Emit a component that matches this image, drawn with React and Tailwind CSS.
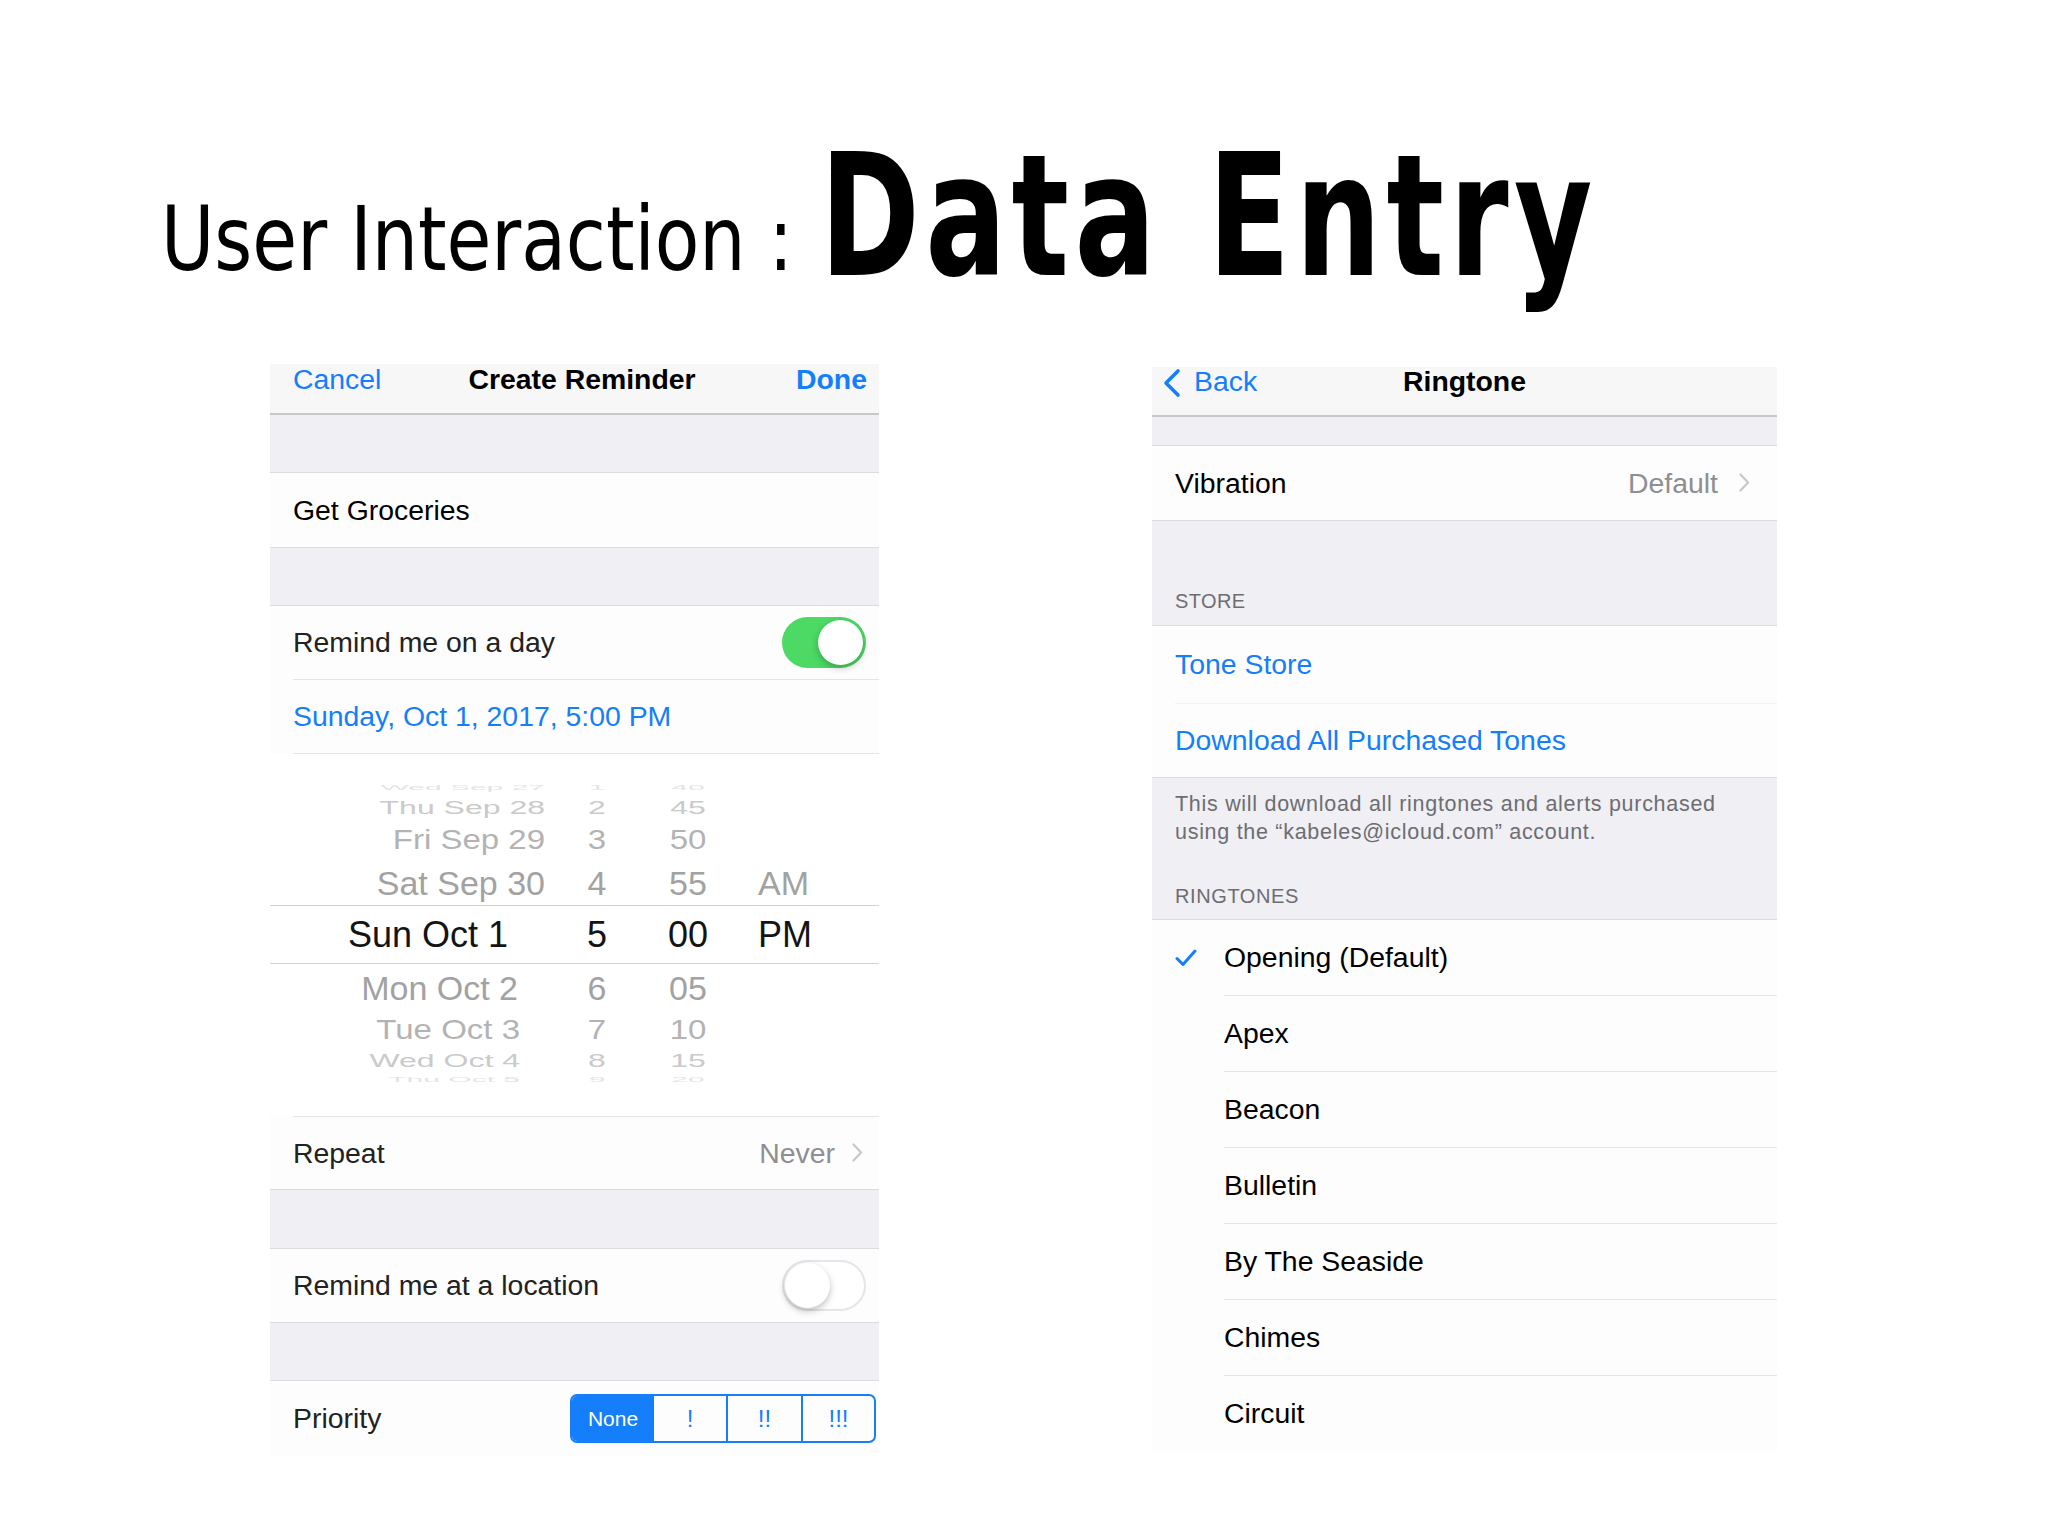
import React from 'react';

const pickerRows = [
  { cls: 'h-[15px] text-[30px] text-[#e4e4e4] scale-y-[0.25]', date: 'Wed Sep 27', pr: 'pr-0', hr: '1', min: '40', ampm: '' },
  { cls: 'h-[25px] text-[32px] text-[#cacaca] scale-y-[0.55]', date: 'Thu Sep 28', pr: 'pr-0', hr: '2', min: '45', ampm: '' },
  { cls: 'h-[40px] text-[33px] text-[#b3b3b3] scale-y-[0.85]', date: 'Fri Sep 29', pr: 'pr-0', hr: '3', min: '50', ampm: '' },
  { cls: 'h-[45px] text-[34px] text-[#a2a2a2]', date: 'Sat Sep 30', pr: 'pr-0', hr: '4', min: '55', ampm: 'AM' },
  { cls: 'h-[59px] text-[36px] text-[#141414] border-y border-[#d2d2d6]', date: 'Sun Oct 1', pr: 'pr-[37px]', hr: '5', min: '00', ampm: 'PM' },
  { cls: 'h-[47px] text-[34px] text-[#a2a2a2]', date: 'Mon Oct 2', pr: 'pr-[27px]', hr: '6', min: '05', ampm: '' },
  { cls: 'h-[38px] text-[33px] text-[#b3b3b3] scale-y-[0.85]', date: 'Tue Oct 3', pr: 'pr-[25px]', hr: '7', min: '10', ampm: '' },
  { cls: 'h-[23px] text-[32px] text-[#cacaca] scale-y-[0.55]', date: 'Wed Oct 4', pr: 'pr-[25px]', hr: '8', min: '15', ampm: '' },
  { cls: 'h-[14px] text-[30px] text-[#e4e4e4] scale-y-[0.25]', date: 'Thu Oct 5', pr: 'pr-[25px]', hr: '9', min: '20', ampm: '' },
];

const ringtones = ['Opening (Default)', 'Apex', 'Beacon', 'Bulletin', 'By The Seaside', 'Chimes', 'Circuit'];

function Chevron() {
  return (
    <svg width="11" height="19" viewBox="0 0 11 19" fill="none">
      <path d="M1.5 1.5 L9 9.5 L1.5 17.5" stroke="#c7c7cc" strokeWidth="2.2" strokeLinecap="round" strokeLinejoin="round" />
    </svg>
  );
}

function Toggle({ on }) {
  if (on) {
    return (
      <div className="w-[84px] h-[51px] rounded-full bg-[#4cd964] p-[3px] flex justify-end">
        <div className="w-[45px] h-[45px] rounded-full bg-white shadow-[0_3px_7px_rgba(0,0,0,0.25)]" />
      </div>
    );
  }
  return (
    <div className="w-[84px] h-[51px] rounded-full bg-white border-2 border-[#e5e5ea] p-px flex">
      <div className="w-[45px] h-[45px] rounded-full bg-white shadow-[0_3px_7px_rgba(0,0,0,0.25)]" />
    </div>
  );
}

function Gap({ h }) {
  return <div className={`${h} bg-[#efeff4] border-b border-[#dcdce0]`} />;
}

function ReminderPanel() {
  return (
    <div className="w-[609px] bg-[#fdfdfd] text-[28.4px] text-black">
      {/* nav */}
      <div className="h-[51px] bg-[#f7f7f8] border-b-2 border-[#c8c7cc] grid grid-cols-[1fr_auto_1fr] pl-[23px] pr-[12px] leading-[30px]">
        <span className="text-[#147efb]">Cancel</span>
        <span className="font-semibold pl-[4px]">Create Reminder</span>
        <span className="justify-self-end font-semibold text-[#147efb]">Done</span>
      </div>
      <Gap h="h-[58px]" />

      <div className="h-[74px] flex items-center pl-[23px]">Get Groceries</div>
      <div className="h-[59px] bg-[#efeff4] border-y border-[#dcdce0]" />

      <div className="h-[73px] flex items-center justify-between pl-[23px] pr-[13px] text-[#222]">
        <span>Remind me on a day</span>
        <Toggle on />
      </div>
      <div className="ml-[23px] border-t border-[#e4e4e8]" />
      <div className="h-[73px] flex items-center pl-[23px] text-[#147efb]">Sunday, Oct 1, 2017, 5:00 PM</div>
      <div className="ml-[23px] border-t border-[#e4e4e8]" />

      {/* date picker */}
      <div className="h-[362px] pt-[26px] bg-white">
        {pickerRows.map((r) => (
          <div key={r.date} className={`${r.cls} flex items-center leading-[40px]`}>
            <div className="flex w-full items-center">
              <div className={`w-[275px] text-right shrink-0 ${r.pr}`}>{r.date}</div>
              <div className="w-[104px] text-center shrink-0">{r.hr}</div>
              <div className="w-[78px] text-center shrink-0">{r.min}</div>
              <div className="pl-[31px]">{r.ampm}</div>
            </div>
          </div>
        ))}
      </div>

      <div className="ml-[23px] border-t border-[#e4e4e8]" />
      <div className="h-[72px] flex items-center justify-between pl-[23px] pr-[16px] text-[#222]">
        <span>Repeat</span>
        <span className="flex items-center gap-[17px] text-[#8e8e93]">
          Never
          <Chevron />
        </span>
      </div>
      <div className="h-[60px] bg-[#efeff4] border-y border-[#dcdce0]" />

      <div className="h-[73px] flex items-center justify-between pl-[23px] pr-[13px] text-[#222]">
        <span>Remind me at a location</span>
        <Toggle on={false} />
      </div>
      <div className="h-[59px] bg-[#efeff4] border-y border-[#dcdce0]" />

      <div className="h-[75px] flex items-center justify-between pl-[23px] pr-[3px] text-[#222]">
        <span>Priority</span>
        <div className="flex h-[49px] border-2 border-[#147efb] rounded-[7px] overflow-hidden text-[#147efb]">
          <div className="w-[82px] bg-[#147efb] text-white text-[21px] flex items-center justify-center">None</div>
          <div className="w-[72px] flex items-center justify-center text-[24px]">!</div>
          <div className="w-[75px] border-l-2 border-[#147efb] flex items-center justify-center text-[24px]">!!</div>
          <div className="w-[73px] border-l-2 border-[#147efb] flex items-center justify-center text-[24px]">!!!</div>
        </div>
      </div>
    </div>
  );
}

function RingtonePanel() {
  return (
    <div className="w-[625px] mt-[3px] bg-[#fdfdfd] text-[28.4px] text-black">
      {/* nav */}
      <div className="h-[50px] bg-[#f7f7f8] border-b-2 border-[#c8c7cc] grid grid-cols-[1fr_auto_1fr] px-[10px] leading-[28px]">
        <span className="flex items-start gap-[12px] text-[#147efb]">
          <svg width="20" height="30" viewBox="0 0 20 30" fill="none" className="mt-[1px]">
            <path d="M16 3 L4 15 L16 27" stroke="#147efb" strokeWidth="3.6" strokeLinecap="round" strokeLinejoin="round" />
          </svg>
          Back
        </span>
        <span className="font-semibold">Ringtone</span>
        <span />
      </div>
      <Gap h="h-[29px]" />

      <div className="h-[74px] flex items-center justify-between pl-[23px] pr-[27px]">
        <span>Vibration</span>
        <span className="flex items-center gap-[21px] text-[#8e8e93]">
          Default
          <Chevron />
        </span>
      </div>

      <div className="h-[106px] bg-[#efeff4] border-y border-[#dcdce0] flex items-end pl-[23px] pb-[12px] text-[20px] leading-[24px] tracking-[0.02em] text-[#6d6d72]">
        STORE
      </div>

      <div className="h-[77px] flex items-center pl-[23px] text-[#147efb]">Tone Store</div>
      <div className="ml-[23px] border-t border-[#f2f2f4]" />
      <div className="h-[73px] flex items-center pl-[23px] text-[#147efb]">Download All Purchased Tones</div>

      <div className="h-[143px] bg-[#efeff4] border-y border-[#dcdce0] pl-[23px] pt-[12px] text-[21.5px] leading-[28px] tracking-[0.033em] text-[#6d6d72]">
        <div className="whitespace-nowrap">This will download all ringtones and alerts purchased</div>
        <div className="whitespace-nowrap">using the “kabeles@icloud.com” account.</div>
        <div className="mt-[38px] leading-[24px] text-[20px] tracking-[0.03em]">RINGTONES</div>
      </div>

      {ringtones.map((t, i) => (
        <div key={t}>
          {i > 0 && <div className="ml-[72px] border-t border-[#e4e4e8]" />}
          <div className="h-[75px] flex items-center">
            <div className="w-[72px] pl-[23px] shrink-0">
              {i === 0 && (
                <svg width="22" height="18" viewBox="0 0 22 18" fill="none">
                  <path d="M2 9.5 L8 15.5 L20 2" stroke="#147efb" strokeWidth="3" strokeLinecap="round" strokeLinejoin="round" />
                </svg>
              )}
            </div>
            <span>{t}</span>
          </div>
        </div>
      ))}
    </div>
  );
}

export default function App() {
  return (
    <div className="w-[2048px] h-[1536px] bg-white overflow-hidden font-['Liberation_Sans',Arial,sans-serif]">
      {/* title */}
      <div className="h-[364px] pl-[161px] pt-[131px] flex items-baseline text-black font-['DejaVu_Sans_Condensed','DejaVu_Sans',sans-serif] leading-none whitespace-nowrap">
        <div className="w-[659px] shrink-0">
          <span className="inline-block origin-left scale-x-[0.91] text-[89px] relative -top-[5px]">User Interaction :</span>
        </div>
        <div>
          <span className="inline-block origin-left scale-x-[0.786] text-[170px] font-bold tracking-[0.04em]">Data Entry</span>
        </div>
      </div>

      <div className="flex items-start pl-[270px] gap-[273px]">
        <ReminderPanel />
        <RingtonePanel />
      </div>
    </div>
  );
}
